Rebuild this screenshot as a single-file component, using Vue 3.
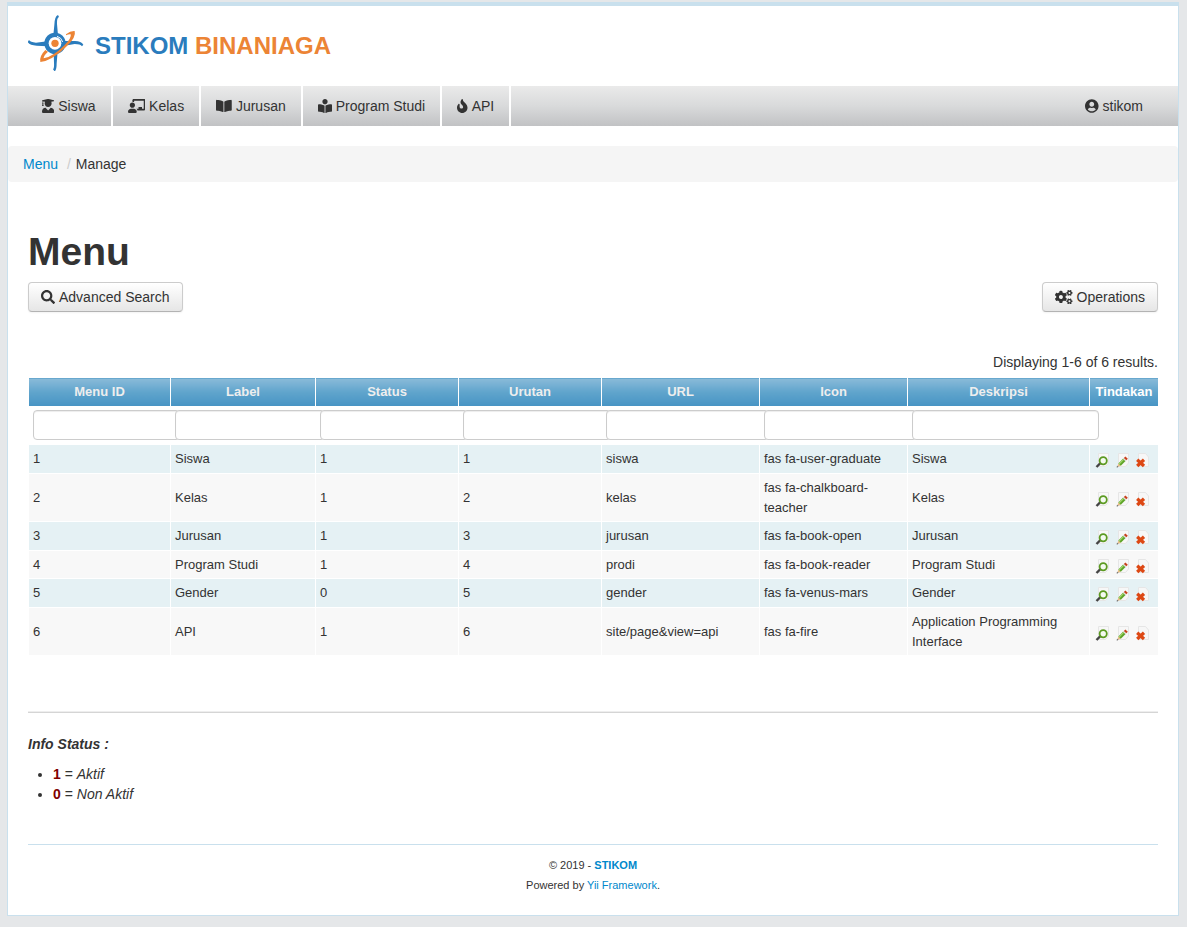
<script setup>
import { ref } from 'vue'

const icons = {
  graduate: {
    w: 448,
    d: 'M319.4 320.6L224 416l-95.4-95.4C57.1 323.7 0 382.2 0 454.4v9.6c0 26.5 21.5 48 48 48h352c26.5 0 48-21.5 48-48v-9.6c0-72.2-57.1-130.7-128.6-133.8zM13.6 79.8l6.4 1.5v58.4c-7 4.2-12 11.5-12 20.3 0 8.4 4.6 15.4 11.1 19.7L3.5 242c-1.7 6.9 2.1 14 7.6 14h41.8c5.5 0 9.3-7.1 7.6-14l-15.6-62.3C51.4 175.4 56 168.4 56 160c0-8.8-5-16.1-12-20.3V87.1l66 15.9c-8.6 17.2-14 36.4-14 57 0 70.7 57.3 128 128 128s128-57.3 128-128c0-20.6-5.3-39.8-14-57l96.3-23.2c18.2-4.4 18.2-27.1 0-31.5l-190.4-46c-13-3.1-26.7-3.1-39.7 0L13.6 48.2c-18.1 4.4-18.1 27.2 0 31.6z',
  },
  teacher: {
    w: 640,
    d: 'M208 352c-2.39 0-4.78.35-7.06 1.09C187.98 357.3 174.35 360 160 360c-14.35 0-27.98-2.7-40.95-6.91-2.28-.74-4.66-1.09-7.05-1.09C49.94 352-.33 402.48 0 464.62.14 490.88 21.73 512 48 512h224c26.27 0 47.86-21.12 48-47.38.33-62.14-49.94-112.62-112-112.62zm-48-32c53.02 0 96-42.98 96-96s-42.98-96-96-96-96 42.98-96 96 42.98 96 96 96zM592 0H208c-26.47 0-48 22.25-48 49.59V96c23.42 0 45.1 6.78 64 17.8V64h352v288h-64v-64H384v64h-76.24c19.1 16.69 33.12 38.73 39.69 64H592c26.47 0 48-22.25 48-49.59V49.59C640 22.25 618.47 0 592 0z',
  },
  book: {
    w: 576,
    d: 'M542.22 32.05c-54.8 3.11-163.72 14.43-230.96 55.59-4.64 2.84-7.27 7.89-7.27 13.17v363.87c0 11.55 12.63 18.85 23.28 13.49 69.18-34.82 169.23-44.32 218.7-46.92 16.89-.89 30.02-14.43 30.02-30.66V62.75c.01-17.71-15.35-31.74-33.77-30.7zM264.73 87.64C197.5 46.48 88.58 35.17 33.78 32.05 15.36 31.01 0 45.04 0 62.75V400.6c0 16.24 13.13 29.78 30.02 30.66 49.49 2.6 149.59 12.11 218.77 46.95 10.62 5.35 23.21-1.94 23.21-13.46V100.63c0-5.29-2.62-10.14-7.27-12.99z',
  },
  reader: {
    w: 512,
    d: 'M352 96c0-53.02-42.98-96-96-96s-96 42.98-96 96 42.98 96 96 96 96-42.98 96-96zM233.59 241.1c-59.33-36.32-155.43-46.3-203.79-49.05C13.55 191.13 0 203.51 0 219.14v222.8c0 14.33 11.59 26.28 26.49 27.05 43.66 2.29 131.99 10.68 193.04 41.43 9.37 4.72 20.48-1.71 20.48-11.87V252.56c-.01-4.67-2.32-8.95-6.42-11.46zm248.61-49.05c-48.35 2.74-144.46 12.73-203.78 49.05-4.1 2.51-6.41 6.96-6.41 11.63v245.79c0 10.19 11.14 16.63 20.54 11.9 61.04-30.72 149.32-39.11 192.97-41.4 14.9-.78 26.49-12.73 26.49-27.06V219.14c-.01-15.63-13.56-28.01-29.81-27.09z',
  },
  fire: {
    w: 384,
    d: 'M216 23.86c0-23.8-30.65-32.77-44.15-13.04C48 191.85 224 200 224 288c0 35.63-29.11 64.46-64.85 63.99-35.17-.45-63.15-29.77-63.15-64.94v-85.51c0-21.7-26.47-32.23-41.43-16.5C27.8 213.16 0 261.33 0 320c0 105.87 86.13 192 192 192s192-86.13 192-192c0-170.29-168-193-168-296.14z',
  },
}

const smallGear =
  'M512.1 191l-8.2 14.3c-3 5.3-9.4 7.5-15.1 5.4-11.8-4.4-22.6-10.7-32.1-18.6-4.6-3.8-5.8-10.5-2.8-15.7l8.2-14.3c-6.9-8-12.3-17.3-15.9-27.4h-16.5c-6 0-11.2-4.3-12.2-10.3-2-12-2.1-24.6 0-37.1 1-6 6.2-10.4 12.2-10.4h16.5c3.6-10.1 9-19.4 15.9-27.4l-8.2-14.3c-3-5.2-1.9-11.9 2.8-15.7 9.5-7.9 20.4-14.2 32.1-18.6 5.7-2.1 12.1.1 15.1 5.4l8.2 14.3c10.5-1.9 21.2-1.9 31.7 0L552 6.3c3-5.3 9.4-7.5 15.1-5.4 11.8 4.4 22.6 10.7 32.1 18.6 4.6 3.8 5.8 10.5 2.8 15.7l-8.2 14.3c6.9 8 12.3 17.3 15.9 27.4h16.5c6 0 11.2 4.3 12.2 10.3 2 12 2.1 24.6 0 37.1-1 6-6.2 10.4-12.2 10.4h-16.5c-3.6 10.1-9 19.4-15.9 27.4l8.2 14.3c3 5.2 1.9 11.9-2.8 15.7-9.5 7.9-20.4 14.2-32.1 18.6-5.7 2.1-12.1-.1-15.1-5.4l-8.2-14.3c-10.4 1.9-21.2 1.9-31.7 0zm-10.5-58.8c38.5 29.6 82.4-14.3 52.8-52.8-38.5-29.7-82.4 14.3-52.8 52.8z'

const menu = [
  { label: 'Siswa', icon: icons.graduate },
  { label: 'Kelas', icon: icons.teacher },
  { label: 'Jurusan', icon: icons.book },
  { label: 'Program Studi', icon: icons.reader },
  { label: 'API', icon: icons.fire },
]

const columns = ['Menu ID', 'Label', 'Status', 'Urutan', 'URL', 'Icon', 'Deskripsi']
const filters = ref(columns.map(() => ''))

const rows = [
  ['1', 'Siswa', '1', '1', 'siswa', 'fas fa-user-graduate', 'Siswa'],
  ['2', 'Kelas', '1', '2', 'kelas', 'fas fa-chalkboard-teacher', 'Kelas'],
  ['3', 'Jurusan', '1', '3', 'jurusan', 'fas fa-book-open', 'Jurusan'],
  ['4', 'Program Studi', '1', '4', 'prodi', 'fas fa-book-reader', 'Program Studi'],
  ['5', 'Gender', '0', '5', 'gender', 'fas fa-venus-mars', 'Gender'],
  ['6', 'API', '1', '6', 'site/page&view=api', 'fas fa-fire', 'Application Programming Interface'],
]
</script>

<template>
  <div class="page">
    <header class="header">
      <svg class="logo" viewBox="24 15 168 168" aria-hidden="true">
        <g fill="#2a7cbd">
          <path d="M100 76L103 45Q104 18 114 15L117 21Q110 24 111 42L114 76Z" />
          <path d="M130 93L162 93Q183 92 190 104L186 109Q181 102 164 102L130 108Z" />
          <path d="M113 124L110 160Q110 181 104 184L99 178Q103 176 102 158L101 124Z" />
          <path d="M82 109L50 107Q28 107 23 96L27 90Q31 97 48 98L82 94Z" />
          <circle cx="105" cy="100" r="32" />
        </g>
        <circle cx="105" cy="100" r="19" fill="#fff" />
        <path d="M111 79a23 23 0 0 1 17 17" fill="none" stroke="#fff" stroke-width="3" />
        <circle cx="105" cy="100" r="11" fill="#ec8435" />
        <path
          d="M138 73Q152 62 164 63Q170 82 138 111Q94 153 61 156Q57 139 76 120L84 125Q70 138 71 145Q98 140 132 107Q156 84 152 73Q146 72 138 76Z"
          fill="#ec8435"
        />
      </svg>
      <div class="brand"><span class="blue">STIKOM</span> <span class="orange">BINANIAGA</span></div>
    </header>

    <nav class="nav">
      <a v-for="item in menu" :key="item.label" href="#" class="item">
        <svg class="icon" :viewBox="`0 0 ${item.icon.w} 512`" aria-hidden="true"><path :d="item.icon.d" /></svg>
        <span>{{ item.label }}</span>
      </a>
      <a href="#" class="item user">
        <svg class="icon" viewBox="0 0 496 512" aria-hidden="true">
          <path d="M248 8C111 8 0 119 0 256s111 248 248 248 248-111 248-248S385 8 248 8zm0 96c48.6 0 88 39.4 88 88s-39.4 88-88 88-88-39.4-88-88 39.4-88 88-88zm0 344c-58.7 0-111.3-26.6-146.5-68.2 18.8-35.4 55.6-59.8 98.5-59.8 2.4 0 4.8.4 7.1 1.1 13 4.2 26.6 6.9 40.9 6.9 14.3 0 28-2.7 40.9-6.9 2.3-.7 4.7-1.1 7.1-1.1 42.9 0 79.7 24.4 98.5 59.8C359.3 421.4 306.7 448 248 448z" />
        </svg>
        <span>stikom</span>
      </a>
    </nav>

    <div class="breadcrumb"><a href="#">Menu</a> <span class="divider">/</span>Manage</div>

    <main class="content">
      <h1>Menu</h1>
      <div class="toolbar">
        <button type="button" class="btn">
          <svg class="icon" viewBox="0 0 512 512" aria-hidden="true">
            <path d="M505 442.7L405.3 343c-4.5-4.5-10.6-7-17-7H372c27.6-35.3 44-79.7 44-128C416 93.1 322.9 0 208 0S0 93.1 0 208s93.1 208 208 208c48.3 0 92.7-16.4 128-44v16.3c0 6.4 2.5 12.5 7 17l99.7 99.7c9.4 9.4 24.6 9.4 33.9 0l28.3-28.3c9.4-9.4 9.4-24.6.1-34zM208 336c-70.7 0-128-57.2-128-128 0-70.7 57.2-128 128-128 70.7 0 128 57.2 128 128 0 70.7-57.2 128-128 128z" />
          </svg>
          <span>Advanced Search</span>
        </button>
        <button type="button" class="btn">
          <svg class="icon" viewBox="0 0 640 512" aria-hidden="true">
            <path :d="smallGear" />
            <path :d="smallGear" transform="translate(0 307)" />
            <path d="M386.3 286.1l33.7 16.8c10.1 5.8 14.5 18.1 10.5 29.1-8.9 24.2-26.4 46.4-42.6 65.8-7.4 8.9-20.2 11.1-30.3 5.3l-29.1-16.8c-16 13.7-34.6 24.6-54.9 31.7v33.6c0 11.6-8.3 21.6-19.7 23.6-24.6 4.2-50.4 4.4-75.9 0-11.5-2-20-11.9-20-23.6V418c-20.3-7.2-38.9-18-54.9-31.7L74 403c-10 5.8-22.9 3.6-30.3-5.3-16.2-19.4-33.3-41.6-42.2-65.7-4-10.9.4-23.2 10.5-29.1l33.3-16.8c-3.9-20.9-3.9-42.4 0-63.4L12 205.8c-10.1-5.8-14.6-18.1-10.5-29 8.9-24.2 26-46.4 42.2-65.8 7.4-8.9 20.2-11.1 30.3-5.3l29.1 16.8c16-13.7 34.6-24.6 54.9-31.7V57.1c0-11.5 8.2-21.5 19.6-23.5 24.6-4.2 50.5-4.4 76-.1 11.5 2 20 11.9 20 23.6v33.6c20.3 7.2 38.9 18 54.9 31.7l29.1-16.8c10-5.8 22.9-3.6 30.3 5.3 16.2 19.4 33.2 41.6 42.1 65.8 4 10.9.1 23.2-10 29.1l-33.7 16.8c3.9 21 3.9 42.5 0 63.5zm-117.6 21.1c59.2-77-28.7-164.9-105.7-105.7-59.2 77 28.7 164.9 105.7 105.7z" />
          </svg>
          <span>Operations</span>
        </button>
      </div>

      <div class="summary">Displaying 1-6 of 6 results.</div>

      <table class="grid">
        <colgroup>
          <col class="c-id" />
          <col class="c-label" />
          <col class="c-num" />
          <col class="c-num" />
          <col class="c-url" />
          <col class="c-icon" />
          <col class="c-desc" />
          <col class="c-act" />
        </colgroup>
        <thead>
          <tr>
            <th v-for="c in columns" :key="c" scope="col"><a href="#">{{ c }}</a></th>
            <th scope="col">Tindakan</th>
          </tr>
          <tr class="filters">
            <td v-for="(c, i) in columns" :key="c">
              <input v-model="filters[i]" type="text" :aria-label="c" />
            </td>
            <td></td>
          </tr>
        </thead>
        <tbody>
          <tr v-for="row in rows" :key="row[0]">
            <td v-for="(cell, i) in row" :key="i">{{ cell }}</td>
            <td>
              <div class="actions">
                <a href="#" aria-label="View">
                  <svg viewBox="0 0 16 16">
                    <path d="M3.5 .5H13.5V10L10.5 13.5H3.5Z" fill="#f7f7f7" stroke="#e6e6e6" />
                    <path d="M1.5 14L5.5 10" stroke="#444" stroke-width="2.4" />
                    <circle cx="8.2" cy="7.8" r="3.6" fill="#f4faf0" stroke="#5c9a22" stroke-width="1.8" />
                  </svg>
                </a>
                <a href="#" aria-label="Update">
                  <svg viewBox="0 0 16 16">
                    <path d="M3.5 .5H13.5V10L10.5 13.5H3.5Z" fill="#f7f7f7" stroke="#e6e6e6" />
                    <path d="M2.2 14L3.4 10.4L6 12.8Z" fill="#e9bd84" />
                    <path d="M4.6 11.6L9.4 6.8" stroke="#5fa52a" stroke-width="3.4" />
                    <path d="M4.2 10.8L8.6 6.4" stroke="#a5d86e" stroke-width="1.2" />
                    <path d="M9.2 7L10.2 6" stroke="#ddd" stroke-width="3.4" />
                    <path d="M10.1 6.1L11.6 4.6" stroke="#c8401c" stroke-width="3.4" />
                    <path d="M1.8 14.4L3 13.2" stroke="#777" stroke-width="1.2" />
                  </svg>
                </a>
                <a href="#" aria-label="Delete">
                  <svg viewBox="0 0 16 16">
                    <path d="M3.5 .5H10.5L13.5 4V13.5H3.5Z" fill="#f7f7f7" stroke="#e6e6e6" />
                    <path d="M2.2 6.8L9 13M9 6.8L2.2 13" stroke="#dd4814" stroke-width="3.3" />
                  </svg>
                </a>
              </div>
            </td>
          </tr>
        </tbody>
      </table>

      <hr />

      <p class="info">Info Status :</p>
      <ul>
        <li><b>1</b> = <i>Aktif</i></li>
        <li><b>0</b> = <i>Non Aktif</i></li>
      </ul>

      <footer class="footer">
        <div>© 2019 - <a href="#"><b>STIKOM</b></a></div>
        <div>Powered by <a href="#">Yii Framework</a>.</div>
      </footer>
    </main>
  </div>
</template>

<style>
html {
  background: #e5e7e9;
}
</style>

<style scoped>
.page {
  margin: 2px 8px 11px 7px;
  border: 1px solid #c9e0ed;
  border-top-width: 4px;
  background: #fff;
  color: #333;
  font: 14px/20px Arial, 'Liberation Sans', sans-serif;
}
a {
  color: #0088cc;
  text-decoration: none;
}
.header {
  display: flex;
  align-items: center;
  gap: 11px;
  height: 80px;
  box-sizing: border-box;
  padding: 0 20px 6px;
}
.logo {
  width: 56px;
  height: 56px;
}
.brand {
  font-size: 24px;
  line-height: 30px;
  font-weight: bold;
  padding-top: 6px;
}
.blue {
  color: #2a7cbd;
}
.orange {
  color: #ec8435;
}
.nav {
  display: flex;
  padding: 0 20px 0 19px;
  background: linear-gradient(#eaeaea, #d9dadb 50%, #c1c2c4);
}
.item {
  display: flex;
  align-items: center;
  gap: 4px;
  padding: 10px 15px;
  border-right: 2px solid #fff;
  color: #333;
}
.user {
  margin-left: auto;
  border-right: 0;
}
.icon {
  height: 14px;
  fill: #333;
}
.breadcrumb {
  margin-top: 20px;
  padding: 8px 15px;
  border-radius: 4px;
  background: #f5f5f5;
}
.divider {
  padding: 0 5px;
  color: #ccc;
}
.content {
  padding: 50px 20px 0;
}
h1 {
  margin: 0 0 10px;
  font-size: 39px;
  line-height: 40px;
}
.toolbar {
  display: flex;
  justify-content: space-between;
}
.btn {
  display: flex;
  align-items: center;
  gap: 4px;
  padding: 4px 12px;
  border: 1px solid #ccc;
  border-bottom-color: #b3b3b3;
  border-radius: 4px;
  background: linear-gradient(#fff, #e6e6e6);
  box-shadow: inset 0 1px 0 rgba(255, 255, 255, 0.2), 0 1px 2px rgba(0, 0, 0, 0.05);
  color: #333;
  font: inherit;
  cursor: pointer;
}
.summary {
  margin: 40px 0 5px;
  text-align: right;
}
.grid {
  width: 100%;
  table-layout: fixed;
  border-collapse: collapse;
  font-size: 13px;
}
.c-id {
  width: 142px;
}
.c-label {
  width: 145px;
}
.c-num {
  width: 143px;
}
.c-url {
  width: 158px;
}
.c-icon {
  width: 148px;
}
.c-desc {
  width: 182px;
}
.c-act {
  width: 69px;
}
th,
td {
  padding: 4px;
  border: 1px solid #fff;
  text-align: left;
}
th {
  background: linear-gradient(#8abbd9, #5fa4cc 50%, #4794c4);
  color: #fff;
  text-align: center;
  white-space: nowrap;
}
th a {
  color: #eee;
}
tbody tr:nth-child(odd) {
  background: #e5f1f4;
}
tbody tr:nth-child(even) {
  background: #f8f8f8;
}
tbody tr:nth-child(even) td {
  padding-bottom: 3px;
}
.filters td {
  padding-top: 3px;
}
.filters input {
  display: block;
  position: relative;
  box-sizing: content-box;
  width: 100%;
  height: 20px;
  padding: 4px 6px;
  border: 1px solid #ccc;
  border-radius: 4px;
  background: #fff;
  box-shadow: inset 0 1px 1px rgba(0, 0, 0, 0.075);
  color: #555;
  font: inherit;
}
.actions {
  display: flex;
  align-items: flex-end;
  gap: 4px;
  height: 20px;
  padding-left: 1px;
}
.actions svg {
  display: block;
  width: 16px;
  height: 16px;
}
hr {
  margin: 55px 0 21px;
  border: 0;
  border-top: 1px solid #eee;
  border-bottom: 1px solid #d5d5d5;
}
.info {
  margin: 0 0 10px;
  font-weight: bold;
  font-style: italic;
}
ul {
  margin: 0 0 40px 25px;
  padding: 0;
}
li b {
  color: maroon;
}
.footer {
  padding: 10px 0 20px;
  border-top: 1px solid #c9e0ed;
  font-size: 11px;
  text-align: center;
}
</style>
